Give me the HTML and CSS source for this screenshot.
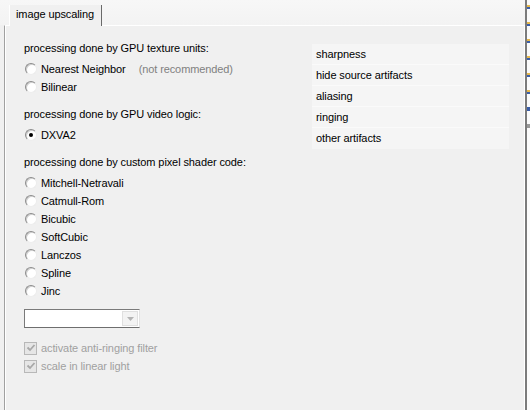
FILE: index.html
```html
<!DOCTYPE html>
<html>
	<head>
		<meta charset="UTF-8">
		<title>image upscaling</title>
		<link rel="stylesheet" href="styles.css">
	</head>
	<body>
		<div class="window">
			<div class="sheet">
				<div class="tabs">
					<div class="tab">image upscaling</div>
				</div>
				<div class="page">
					<div class="col-left">
						<div class="group-title">processing done by GPU texture units:</div>
						<label class="radio"><span class="dot"></span>Nearest Neighbor<span class="hint">(not recommended)</span></label>
						<label class="radio"><span class="dot"></span>Bilinear</label>

						<div class="group-title">processing done by GPU video logic:</div>
						<label class="radio"><span class="dot checked"></span>DXVA2</label>

						<div class="group-title">processing done by custom pixel shader code:</div>
						<label class="radio"><span class="dot"></span>Mitchell-Netravali</label>
						<label class="radio"><span class="dot"></span>Catmull-Rom</label>
						<label class="radio"><span class="dot"></span>Bicubic</label>
						<label class="radio"><span class="dot"></span>SoftCubic</label>
						<label class="radio"><span class="dot"></span>Lanczos</label>
						<label class="radio"><span class="dot"></span>Spline</label>
						<label class="radio"><span class="dot"></span>Jinc</label>

						<div class="combo">
							<div class="combo-text"></div>
							<div class="combo-btn">
								<svg width="7" height="4" viewBox="0 0 7 4"><path d="M0 0h7L3.5 4z" fill="#b4b4b4"/></svg>
							</div>
						</div>

						<label class="check"><span class="box"><svg width="10" height="10" viewBox="0 0 10 10"><path d="M1.5 4.5l2.5 2.5 4.5-5" fill="none" stroke="#a8a8a8" stroke-width="1.8"/></svg></span>activate anti-ringing filter</label>
						<label class="check"><span class="box"><svg width="10" height="10" viewBox="0 0 10 10"><path d="M1.5 4.5l2.5 2.5 4.5-5" fill="none" stroke="#a8a8a8" stroke-width="1.8"/></svg></span>scale in linear light</label>
					</div>
					<div class="col-right">
						<ul class="quality">
							<li>sharpness</li>
							<li>hide source artifacts</li>
							<li>aliasing</li>
							<li>ringing</li>
							<li>other artifacts</li>
						</ul>
					</div>
				</div>
			</div>
			<!-- edge of the window behind -->
			<div class="behind">
				<i class="mark yellow"></i>
				<i class="mark yellow"></i>
				<i class="mark yellow"></i>
				<i class="mark yellow"></i>
				<i class="mark yellow"></i>
				<i class="mark yellow"></i>
				<i class="mark blue"></i>
				<i class="mark gray"></i>
			</div>
		</div>
	</body>
</html>
```

FILE: styles.css
```css
* {
	box-sizing: border-box;
}
body {
	margin: 0;
	width: 530px;
	height: 410px;
	overflow: hidden;
	background-color: #f0f0f0;
	font-family: "Liberation Sans", Arial, sans-serif;
	font-size: 11px;
	letter-spacing: -0.1px;
	color: #000;
}
.window {
	display: flex;
	height: 410px;
}
.sheet {
	width: 525px;
	display: flex;
	flex-direction: column;
	background-color: #f0f0f0;
}
.tabs {
	height: 25px;
	padding: 5px 0 0 9px;
	background: linear-gradient(#f7f7f7, #f3f3f3);
	display: flex;
}
.tab {
	height: 21px;
	padding: 3px 7px 0 6px;
	border-left: 1px solid #fff;
	border-right: 1px solid #6a6a6a;
	background-color: #f0f0f0;
	position: relative;
	z-index: 1;
	margin-bottom: -1px;
}
.page {
	flex: 1;
	margin-left: 4px;
	border-top: 1px solid #fff;
	border-left: 1px solid #a0a0a0;
	border-right: 1px solid #fff;
	box-shadow: inset 1px 0 0 #fff;
	display: flex;
	padding: 16px 0 0 19px;
}
.col-left {
	width: 288px;
	display: flex;
	flex-direction: column;
}
.group-title {
	height: 16px;
	margin-bottom: 2px;
}
.radio + .group-title {
	margin-top: 12px;
}
.radio, .check {
	display: flex;
	align-items: center;
	height: 18px;
	padding-left: 1px;
}
.dot {
	width: 12px;
	height: 12px;
	border-radius: 50%;
	background-color: #fff;
	border: 1px solid;
	border-color: #8c8c8c #ececec #ececec #8c8c8c;
	box-shadow: inset 1px 1px 0 #cfcfcf;
	margin-right: 4px;
	position: relative;
}
.dot.checked::after {
	content: "";
	position: absolute;
	left: 3px;
	top: 3px;
	width: 4px;
	height: 4px;
	border-radius: 50%;
	background-color: #000;
}
.hint {
	color: #808080;
	margin-left: 13px;
}
.combo {
	display: flex;
	width: 116px;
	height: 19px;
	margin-top: 9px;
	border: 1px solid;
	border-color: #7a7a7a #e3e3e3 #6e6e6e #7a7a7a;
	background-color: #fff;
}
.combo-text {
	flex: 1;
}
.combo-btn {
	width: 16px;
	margin: 1px;
	background-color: #f3f3f3;
	border: 1px solid #e0e0e0;
	display: flex;
	align-items: center;
	justify-content: center;
}
.combo + .check {
	margin-top: 11px;
}
.check {
	color: #a0a0a0;
	padding-left: 0;
}
.box {
	width: 13px;
	height: 13px;
	border: 1px solid #b8b8b8;
	background-color: #e6e6e6;
	margin-right: 4px;
	display: flex;
	align-items: center;
	justify-content: center;
}
.col-right {
	padding-top: 2px;
}
.quality {
	list-style: none;
	margin: 0;
	padding: 0;
	width: 197px;
	background-color: #f5f5f5;
}
.quality li {
	height: 21px;
	line-height: 20px;
	padding-left: 4px;
	border-bottom: 1px solid #fafafa;
}
.quality li:last-child {
	border-bottom: none;
}
.behind {
	width: 5px;
	border-left: 2px solid #7b7b7b;
	background-color: #fbfbfb;
	display: flex;
	flex-direction: column;
	padding-top: 5px;
	gap: 13px;
}
.mark {
	display: block;
	width: 3px;
	height: 4px;
}
.mark.yellow {
	background: linear-gradient(#e8b84a 50%, #3b5ea8 50%);
}
.mark.blue {
	background-color: #3b5ea8;
}
.mark.gray {
	background-color: #999;
}
```
